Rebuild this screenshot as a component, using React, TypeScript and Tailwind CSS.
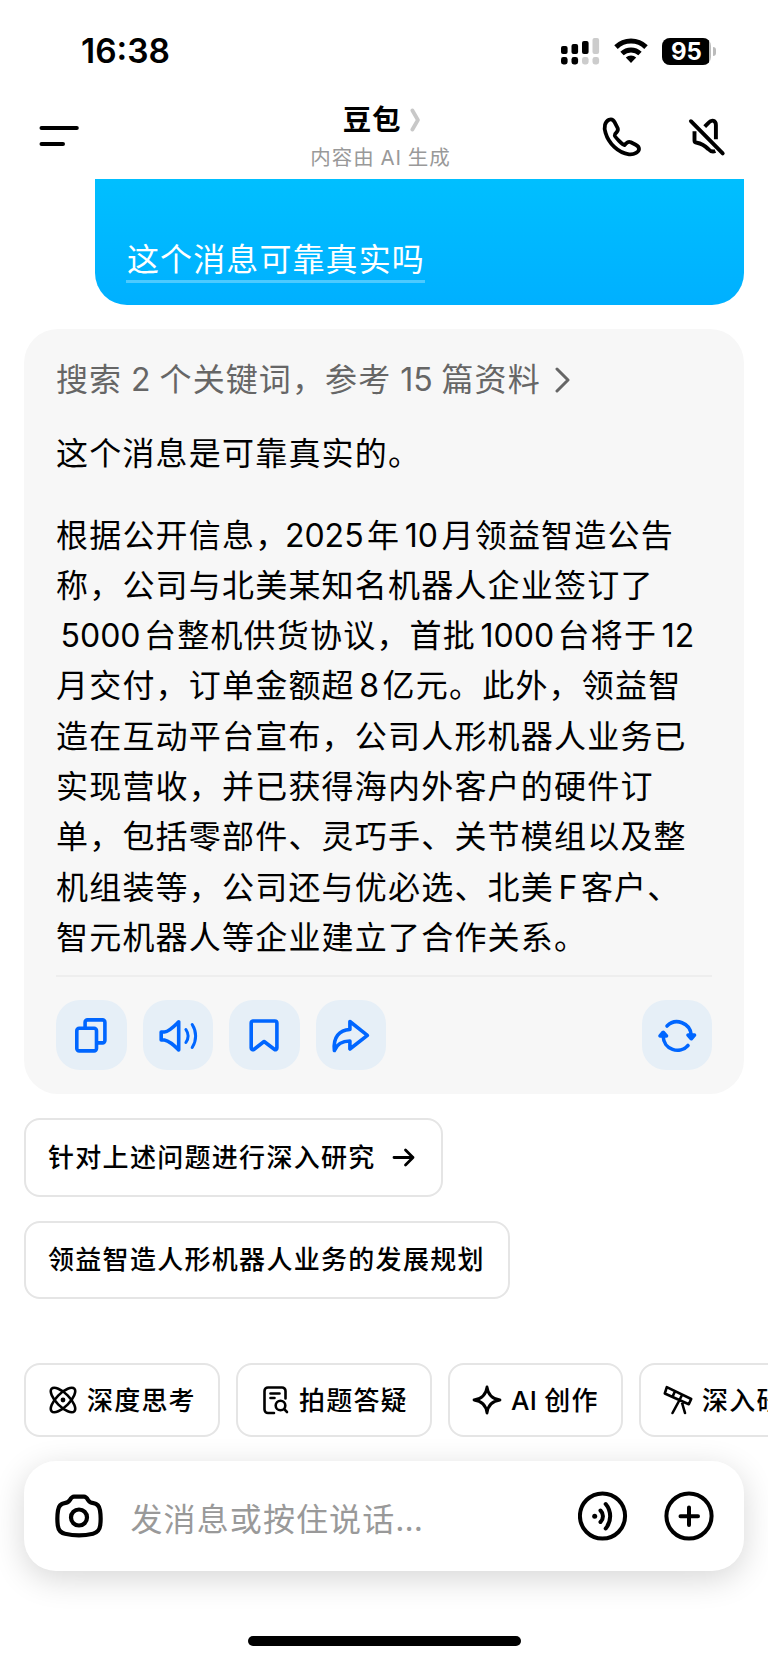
import React from 'react';

/* Latin runs use Inter without tracking, CJK keeps the wider pitch. */
function Mixed({ text }: { text: string }) {
  const parts = text.split(/([A-Za-z0-9]+)/);
  return (
    <>
      {parts.map((part, i) => {
        if (!/[A-Za-z0-9]/.test(part)) return part;
        const afterComma = i > 0 && parts[i - 1].endsWith('，');
        return (
          <span
            key={i}
            className={`mr-[3.5px] font-['Inter'] tracking-normal ${afterComma ? 'ml-[-3.5px]' : 'ml-[4.5px]'}`}
          >
            {part}
          </span>
        );
      })}
    </>
  );
}

const answer = [
  '根据公开信息，2025年10月领益智造公告',
  '称，公司与北美某知名机器人企业签订了',
  '5000台整机供货协议，首批1000台将于12',
  '月交付，订单金额超8亿元。此外，领益智',
  '造在互动平台宣布，公司人形机器人业务已',
  '实现营收，并已获得海内外客户的硬件订',
  '单，包括零部件、灵巧手、关节模组以及整',
  '机组装等，公司还与优必选、北美F客户、',
  '智元机器人等企业建立了合作关系。',
];

function StatusBar() {
  return (
    <div className="flex h-[102px] shrink-0 items-center justify-between pl-[81px] pr-[52px]">
      <span className="pt-[2px] font-['Inter'] text-[33.5px] font-semibold leading-none">16:38</span>
      <div className="flex items-center">
        <svg className="h-7 w-[40px]" viewBox="0 0 40 28">
          <g fill="#000">
            <rect x="1" y="9" width="6.6" height="8" rx="2" />
            <rect x="11.5" y="7" width="6.6" height="10" rx="2" />
            <rect x="22" y="4" width="6.6" height="13" rx="2" />
            <rect x="1" y="20" width="6.6" height="7.5" rx="2.4" />
            <rect x="11.5" y="20" width="6.6" height="7.5" rx="2.4" />
          </g>
          <g fill="#ccc">
            <rect x="32.5" y="1" width="6.6" height="16" rx="2" />
            <rect x="22" y="20" width="6.6" height="7.5" rx="2.4" />
            <rect x="32.5" y="20" width="6.6" height="7.5" rx="2.4" />
          </g>
        </svg>
        <svg className="ml-[13px] h-7 w-[36px]" viewBox="0 0 36 28" fill="none" stroke="#000">
          <path d="M3 10.1a21.6 21.6 0 0 1 30 0" strokeWidth="5" />
          <path d="M9 16.6a13 13 0 0 1 18 0" strokeWidth="4.8" />
          <path d="M12.8 20.6a7.6 7.6 0 0 1 10.4 0L18 26z" fill="#000" stroke="none" />
        </svg>
        <div className="ml-[13px] flex h-[27px] w-[49px] overflow-hidden rounded-[8px] bg-[#bbb]">
          <div className="flex w-[47px] items-center justify-center bg-black pl-[2px] pt-px">
            <span className="font-['Inter'] text-[24px] font-bold leading-none text-white">95</span>
          </div>
        </div>
        <div className="ml-[2px] h-[9px] w-[3px] rounded-r-full bg-[#bbb]" />
      </div>
    </div>
  );
}

function Header() {
  return (
    <header className="flex h-[77px] shrink-0 justify-between">
      <svg className="ml-[38px] mt-[20px] h-[30px] w-[120px] shrink-0" viewBox="0 0 120 30" stroke="#000" strokeWidth="4" strokeLinecap="round">
        <path d="M3.500 6h35.300M3.500 22h21.500" />
      </svg>
      <div className="ml-[4px] flex w-[200px] flex-col items-center">
        <div className="flex h-[36px] items-center pl-[4px]">
          <h1 className="text-[28.5px] font-bold leading-none tracking-[0.8px]">豆包</h1>
          <svg className="ml-[9px] h-6 w-3" viewBox="0 0 12 24" fill="none" stroke="#c8c8c8" strokeWidth="3.8" strokeLinecap="round" strokeLinejoin="round">
            <path d="M2.400 2.500l5.500 9.500-5.500 9.500" />
          </svg>
        </div>
        <p className="mt-[8px] whitespace-nowrap text-[20.5px] leading-[24px] tracking-[1px] text-[#999] [word-spacing:-1px]">
          内容由 <span className="font-['Inter']">AI</span> 生成
        </p>
      </div>
      <div className="mr-[39px] mt-[12px] flex">
        <svg className="h-[46px] w-[46px]" viewBox="0 0 46 46" fill="none" stroke="#000" strokeWidth="3.8" strokeLinecap="round" strokeLinejoin="round">
          <path d="M10 5.7C6 7.6 4.5 13 6.600 19C9.500 29 19 39 30 40.300C35.500 40.900 40 37.800 40 35C40 33 38.500 31.600 36.700 30.700L31.800 28.200C30 27.400 28.500 28 27.400 29.200L25.500 31C23.500 30.800 16.200 23.400 15.700 21.400C15.500 20.500 16.300 19.500 17.400 18.500C18.800 17.200 19.300 15.800 18.600 14L15.700 8.300C14.500 6 12.300 4.800 10 5.700Z" />
        </svg>
        <svg className="ml-[38px] h-[46px] w-[46px] overflow-visible" viewBox="0 0 46 46" fill="none" stroke="#000" strokeWidth="3.900" strokeLinejoin="round">
          <g transform="translate(0.7 0)">
            <path d="M7.200 7.200L39 39.400" strokeLinecap="round" />
            <path d="M10.800 17.200V26.400C10.800 27.800 11.800 28.600 13.200 28.700C19 29.500 22.500 33 24.500 35C26.300 36.900 28.800 38.300 31.600 37" />
            <path d="M21 12.600L24.800 8.800C28.200 5 32.200 6.500 32.200 11V25.300" />
          </g>
        </svg>
      </div>
    </header>
  );
}

function ActionButton({ children }: { children: React.ReactNode }) {
  return (
    <button className="flex h-[70.5px] w-[70.5px] items-center justify-center rounded-[24px] bg-[#e6eff7]">
      <svg className="h-10 w-10 overflow-visible" viewBox="0 0 40 40" fill="none" stroke="#0066ff" strokeWidth="3.6" strokeLinecap="round" strokeLinejoin="round">
        <g transform="translate(0.4 1)">{children}</g>
      </svg>
    </button>
  );
}

function Chip({ label, icon, className }: { label: React.ReactNode; icon: React.ReactNode; className: string }) {
  return (
    <button className={`flex h-[74px] shrink-0 items-center whitespace-nowrap rounded-[16px] border-2 border-[#e5e5e5] pl-[22px] text-[26px] font-medium tracking-[1.2px] ${className}`}>
      <svg className="mr-[9px] h-[30px] w-[30px] shrink-0" viewBox="0 0 30 30" fill="none" stroke="#000" strokeWidth="2.6" strokeLinecap="round" strokeLinejoin="round">
        {icon}
      </svg>
      {label}
    </button>
  );
}

export default function App() {
  return (
    <div className="flex h-[1663px] w-[768px] flex-col overflow-hidden bg-white font-['Inter','Noto_Sans_CJK_SC',sans-serif] text-black">
      <StatusBar />
      <Header />

      <div className="ml-[95px] mr-6 flex h-[126px] shrink-0 items-end rounded-b-[32px] bg-gradient-to-b from-[#00bfff] to-[#00b0ff] pb-[22px] pl-[31px]">
        <span className="border-b-[3px] border-white/30 pl-px pt-[4px] text-[32px] leading-[41px] tracking-[1.1px] text-white">这个消息可靠真实吗</span>
      </div>

      <section className="mx-6 mt-6 flex h-[765px] shrink-0 flex-col rounded-[34px] bg-[#f7f7f7] px-8">
        <button className="mt-[26px] flex h-[50px] items-center whitespace-pre text-[32px] tracking-[1.1px] text-[#666] [word-spacing:-1.2px]">
          <span>
            搜索 <span className="tracking-normal">2</span> 个关键词，参考 <span className="tracking-normal">15</span> 篇资料
          </span>
          <svg className="ml-[14px] h-[26px] w-4" viewBox="0 0 16 26" fill="none" stroke="#666" strokeWidth="3" strokeLinecap="round" strokeLinejoin="round">
            <path d="M2 2l11 11L2 24" />
          </svg>
        </button>
        <p className="mt-[24px] text-[32px] leading-[50px] tracking-[1.2px]">这个消息是可靠真实的。</p>
        <div className="mt-[31.5px] text-[32px] leading-[50.3px] tracking-[1.2px]">
          {answer.map((line, i) => (
            <p key={i} className="whitespace-nowrap">
              <Mixed text={line} />
            </p>
          ))}
        </div>
        <div className="mt-auto border-t-2 border-[#eeeeee] pt-[23px]" />
        <div className="mb-[24px] flex gap-4">
          <ActionButton>
            <g transform="translate(1 0.300)">
              <rect x="4.400" y="12" width="19.700" height="22.600" rx="2.400" />
              <path d="M12.700 11V6a2.400 2.400 0 0 1 2.400-2.400h15a2.400 2.400 0 0 1 2.400 2.400v18.200a2.400 2.400 0 0 1-2.400 2.400H25.500" />
            </g>
          </ActionButton>
          <ActionButton>
            <path d="M2.800 16h3.200C11 15.500 16 10 20.300 5.800V34C16 29.500 11 25 6 24H2.800z" />
            <path d="M27.500 13.500a11.500 11.500 0 0 1 0 13M33.800 8.500a21 21 0 0 1 0 23" strokeWidth="3" />
          </ActionButton>
          <ActionButton>
            <path d="M8.500 5h22a2 2 0 0 1 2 2v25c0 1.700-1.300 2.200-2.600 1.200L19.700 25.500l-10 7.700c-1.300 1-2.900.5-2.900-1.200V7a2 2 0 0 1 1.700-2z" />
          </ActionButton>
          <ActionButton>
            <path d="M18.500 5.500L36 19.300 18.500 33V25C11 25 5.500 28 3 34.500C1.500 21 8 14 18.500 13.500z" />
          </ActionButton>
          <div className="ml-auto">
            <ActionButton>
              <path d="M9.600 10a14.200 14.200 0 0 1 24.200 9M30.600 29.500a14.200 14.200 0 0 1-24.800-9" />
              <path d="M30.600 19h6.500l-3.200 3.700zM2.600 20h6.500L5.800 16.300z" fill="#0066ff" />
            </ActionButton>
          </div>
        </div>
      </section>

      <div className="mt-6 flex shrink-0 flex-col items-start gap-6 px-6 text-[26px] font-medium tracking-[1.300px]">
        <button className="flex h-[78.500px] w-[419px] items-center rounded-[16px] border-2 border-[#e5e5e5] pl-[22px]">
          针对上述问题进行深入研究
          <svg className="ml-[16px] h-5 w-6" viewBox="0 0 24 20" fill="none" stroke="#000" strokeWidth="2.800" strokeLinecap="round" strokeLinejoin="round">
            <path d="M2 10.500h19M13.500 3L21 10.500l-7.500 7.500" />
          </svg>
        </button>
        <button className="flex h-[78.500px] w-[486px] items-center rounded-[16px] border-2 border-[#e5e5e5] pl-[22px]">领益智造人形机器人业务的发展规划</button>
      </div>

      <div className="mt-[64px] flex shrink-0 gap-[16.500px] overflow-hidden pl-6">
        <Chip
          className="w-[195.500px]"
          label="深度思考"
          icon={
            <>
              <ellipse cx="15" cy="15" rx="6.500" ry="16" transform="rotate(45 15 15)" />
              <ellipse cx="15" cy="15" rx="6.500" ry="16" transform="rotate(-45 15 15)" />
              <circle cx="15" cy="15" r="2.400" fill="#000" stroke="none" />
            </>
          }
        />
        <Chip
          className="w-[195.500px]"
          label="拍题答疑"
          icon={
            <>
              <path d="M14 28H8a3.500 3.500 0 0 1-3.500-3.500V6A3.500 3.500 0 0 1 8 2.500h14A3.500 3.500 0 0 1 25.500 6v7.500M10.500 8.500h9M10.500 13h4" />
              <circle cx="20.500" cy="20.500" r="4.800" />
              <path d="M24.200 24.200l2.800 2.800" />
            </>
          }
        />
        <Chip
          className="w-[174.500px]"
          label={
            <span className="whitespace-pre [word-spacing:-1px]">
              <span className="tracking-[0.3px]">AI</span> 创作
            </span>
          }
          icon={<path d="M15 2c1 8 5 12 13 13-8 1-12 5-13 13-1-8-5-12-13-13 8-1 12-5 13-13z" strokeWidth="2.800" />}
        />
        <Chip
          className="w-[195.500px]"
          label="深入研究"
          icon={
            <path d="M3.800 2.200L28.200 14l-2.400 5.200L1.800 8.500zM12 6.200l-2.500 5.500M19 10l-2.500 5M16 16L9.500 28M18.500 16L22 28" />
          }
        />
      </div>

      <div className="mx-6 mt-6 flex h-[110px] shrink-0 items-center rounded-[32px] bg-white pl-[31px] pr-[30px] shadow-[0_8px_32px_rgba(0,0,0,0.16)]">
        <svg className="h-12 w-12" viewBox="0 0 48 48" fill="none" stroke="#000" strokeWidth="4.200" strokeLinejoin="round">
          <path d="M19 4.700h10c1.800 0 3.200 1.800 4.200 3.500 1.200 2 3 2.700 5.200 3 4.200.6 6 3 6.600 7.200.8 5 .8 10.600.2 15.200-.6 4.500-3.200 7.200-7.200 8.200-8.800 2-19.200 2-28 0-4-1-6.600-3.700-7.200-8.200-.6-4.600-.6-10.200.2-15.200.6-4.200 2.400-6.600 6.600-7.200 2.200-.3 4-1 5.200-3 1-1.700 2.400-3.500 4.200-3.500z" />
          <circle cx="24" cy="25.500" r="8" />
        </svg>
        <span className="ml-[27.5px] mt-[7px] text-[32px] leading-[48px] tracking-[1.100px] text-[#999]">
          发消息或按住说话<span className="tracking-normal">...</span>
        </span>
        <svg className="ml-auto h-[50px] w-[50px]" viewBox="0 0 50 50" fill="none" stroke="#000" strokeWidth="4" strokeLinecap="round">
          <circle cx="24.500" cy="25" r="22.600" />
          <circle cx="16.700" cy="25.300" r="2.500" fill="#000" stroke="none" />
          <path d="M22.500 19.500a8 8 0 0 1 0 11.500M27.700 13a19 19 0 0 1 0 24.500" />
        </svg>
        <svg className="ml-[36.500px] h-[50px] w-[50px]" viewBox="0 0 50 50" fill="none" stroke="#000" strokeWidth="4" strokeLinecap="round">
          <circle cx="25" cy="25" r="22.600" />
          <path d="M25 16.500v17.500M16.500 25.200h17.500" />
        </svg>
      </div>

      <div className="mx-auto mt-[65px] h-[10px] w-[273px] shrink-0 rounded-full bg-black" />
    </div>
  );
}
